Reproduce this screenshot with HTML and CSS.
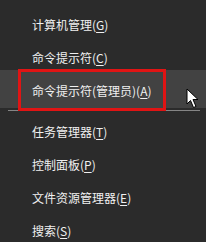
FILE: index.html
```html
<!DOCTYPE html>
<html lang="zh-CN">
<head>
    <meta charset="UTF-8">
    <title>快捷菜单</title>
    <link rel="stylesheet" href="styles.css">
</head>
<body>

    <div class="menu">
        <div class="item">计算机管理(<u>G</u>)</div>
        <div class="item">命令提示符(<u>C</u>)</div>
        <div class="item hover">命令提示符(管理员)(<u>A</u>)</div>
        <div class="sep"></div>
        <div class="item">任务管理器(<u>T</u>)</div>
        <div class="item">控制面板(<u>P</u>)</div>
        <div class="item">文件资源管理器(<u>E</u>)</div>
        <div class="item">搜索(<u>S</u>)</div>

        <!-- 红框标注 -->
        <div class="mark"></div>

        <!-- 鼠标指针 -->
        <svg class="cursor" width="14" height="21" viewBox="0 0 14 21">
            <path d="M1 1 L1 16 L4.5 12.5 L7.5 19.5 L10 18.5 L7 11.5 L12 11.5 Z"
                  fill="#fff" stroke="#000" stroke-width="1" stroke-linejoin="round"/>
        </svg>
    </div>

</body>
</html>
```

FILE: styles.css
```css
/* 页面基础 */
body {
    margin: 0;
    background-color: #2b2b2b;
    font-family: "Noto Sans CJK SC", "Microsoft YaHei", sans-serif;
    overflow: hidden;
}

/* 菜单 */
.menu {
    position: relative;
    width: 206px;
    height: 242px;
    padding-top: 8px;
    box-sizing: border-box;
}

.item {
    height: 33px;
    line-height: 33px;
    padding-left: 32px;
    font-size: 12px;
    color: #f0f0f0;
    white-space: nowrap;
}

.item u {
    text-underline-offset: 2px;
}

.item.hover {
    background-color: #424242;
    margin-top: -4px;
    padding-top: 4px;
    height: 34px;
    line-height: 33px;
}

/* 分隔线 */
.sep {
    height: 1px;
    margin: 2px 6px 4px 8px;
    background-color: #858585;
}

/* 红框 */
.mark {
    position: absolute;
    left: 18px;
    top: 69px;
    width: 142px;
    height: 36px;
    border: 3px solid #e01414;
}

.cursor {
    position: absolute;
    left: 186px;
    top: 88px;
}
```
